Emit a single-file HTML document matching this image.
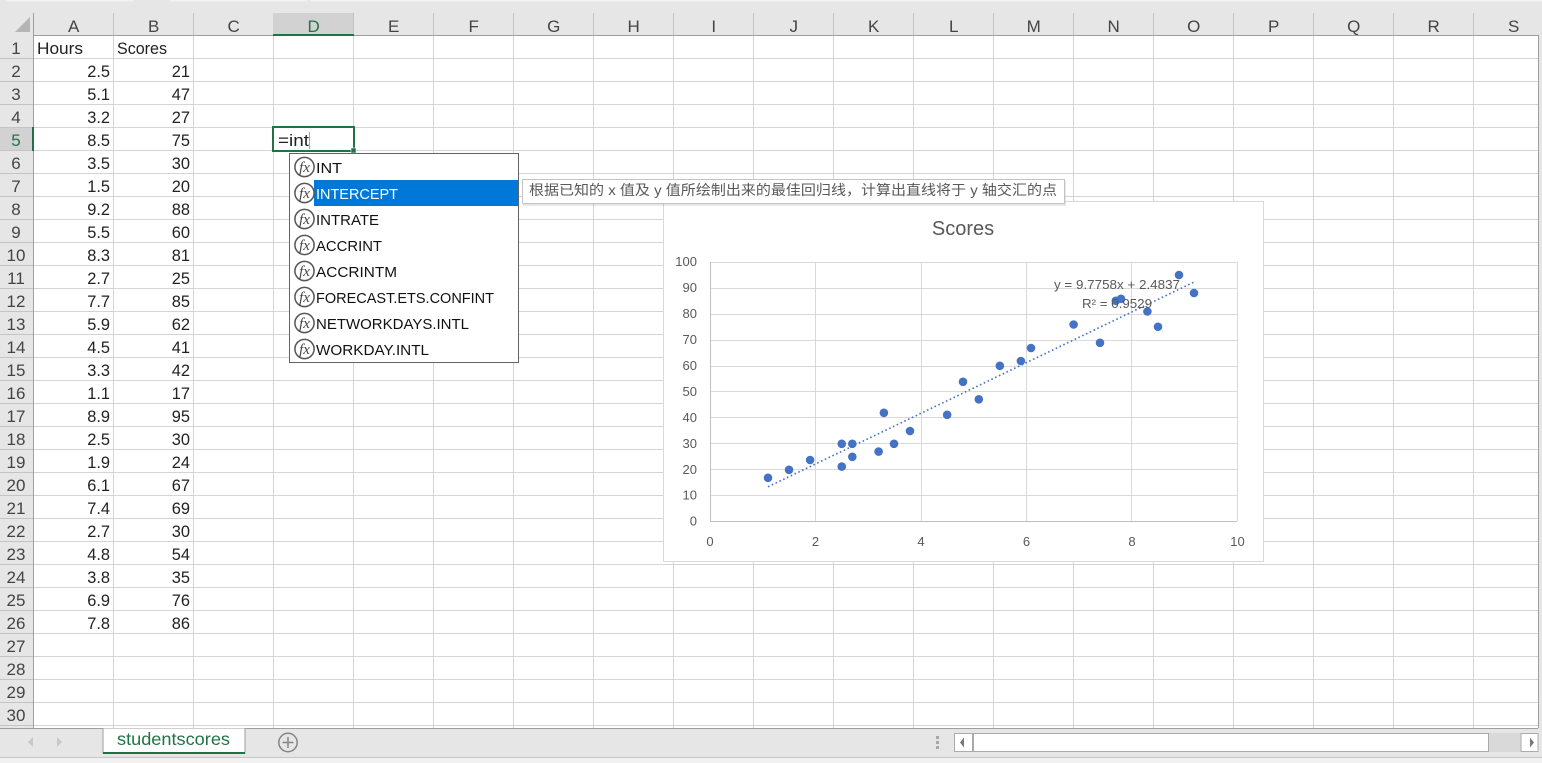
<!DOCTYPE html>
<html><head><meta charset="utf-8"><style>
html,body{margin:0;padding:0;background:#e6e6e6;width:1542px;height:763px;overflow:hidden}
svg{display:block}
text{font-family:"Liberation Sans","Noto Sans CJK SC",sans-serif}
.h{font-size:17px;fill:#444;text-anchor:middle}
.c{font-size:16.4px;fill:#222}
.n{font-size:16.4px;fill:#222;text-anchor:end}
.l{font-size:15px;fill:#111}
.f{font-family:"Liberation Serif",serif;font-style:italic;font-size:15px;fill:#444;text-anchor:middle}
.a{font-size:13px;fill:#595959}
.y{text-anchor:end}
.x{text-anchor:middle}
</style></head><body>
<svg width="1542" height="763" viewBox="0 0 1542 763" xmlns="http://www.w3.org/2000/svg">
<rect width="1542" height="763" fill="#e6e6e6"/>
<rect x="6" y="0" width="127" height="1.5" fill="#f2f2f2"/><rect x="170" y="0" width="137" height="1.5" fill="#f2f2f2"/><rect x="310" y="0" width="1232" height="1.5" fill="#f2f2f2"/>
<!-- sheet -->
<rect x="33" y="35" width="1505" height="693" fill="#fff"/>
<path fill="none" stroke="#d4d4d4" d="M33 58.5H1538M33 81.5H1538M33 104.5H1538M33 127.5H1538M33 150.5H1538M33 173.5H1538M33 196.5H1538M33 219.5H1538M33 242.5H1538M33 265.5H1538M33 288.5H1538M33 311.5H1538M33 334.5H1538M33 357.5H1538M33 380.5H1538M33 403.5H1538M33 426.5H1538M33 449.5H1538M33 472.5H1538M33 495.5H1538M33 518.5H1538M33 541.5H1538M33 564.5H1538M33 587.5H1538M33 610.5H1538M33 633.5H1538M33 656.5H1538M33 679.5H1538M33 702.5H1538M33 725.5H1538M113.5 35V728M193.5 35V728M273.5 35V728M353.5 35V728M433.5 35V728M513.5 35V728M593.5 35V728M673.5 35V728M753.5 35V728M833.5 35V728M913.5 35V728M993.5 35V728M1073.5 35V728M1153.5 35V728M1233.5 35V728M1313.5 35V728M1393.5 35V728M1473.5 35V728"/>
<!-- headers -->
<path fill="none" stroke="#c4c4c4" d="M0 58.5H33M0 81.5H33M0 104.5H33M0 127.5H33M0 150.5H33M0 173.5H33M0 196.5H33M0 219.5H33M0 242.5H33M0 265.5H33M0 288.5H33M0 311.5H33M0 334.5H33M0 357.5H33M0 380.5H33M0 403.5H33M0 426.5H33M0 449.5H33M0 472.5H33M0 495.5H33M0 518.5H33M0 541.5H33M0 564.5H33M0 587.5H33M0 610.5H33M0 633.5H33M0 656.5H33M0 679.5H33M0 702.5H33M0 725.5H33M113.5 13V35M193.5 13V35M273.5 13V35M353.5 13V35M433.5 13V35M513.5 13V35M593.5 13V35M673.5 13V35M753.5 13V35M833.5 13V35M913.5 13V35M993.5 13V35M1073.5 13V35M1153.5 13V35M1233.5 13V35M1313.5 13V35M1393.5 13V35M1473.5 13V35"/>
<rect x="273" y="13" width="80" height="22" fill="#d2d2d2"/>
<rect x="0" y="128" width="33" height="22" fill="#d2d2d2"/>
<path fill="none" stroke="#9f9f9f" d="M33.5 13V728M33 35.5H1538M1538.5 35V728M0 728.5H1538"/>
<rect x="273" y="34" width="81" height="2" fill="#217346"/>
<rect x="32" y="127" width="2" height="24" fill="#217346"/>
<path d="M30 17V32H15Z" fill="#b5b5b5"/>
<text class="h" x="73.7" y="32">A</text><text class="h" x="153.7" y="32">B</text><text class="h" x="233.7" y="32">C</text><text class="h" x="313.7" y="32" style="fill:#217346">D</text><text class="h" x="393.7" y="32">E</text><text class="h" x="473.7" y="32">F</text><text class="h" x="553.7" y="32">G</text><text class="h" x="633.7" y="32">H</text><text class="h" x="713.7" y="32">I</text><text class="h" x="793.7" y="32">J</text><text class="h" x="873.7" y="32">K</text><text class="h" x="953.7" y="32">L</text><text class="h" x="1033.7" y="32">M</text><text class="h" x="1113.7" y="32">N</text><text class="h" x="1193.7" y="32">O</text><text class="h" x="1273.7" y="32">P</text><text class="h" x="1353.7" y="32">Q</text><text class="h" x="1433.7" y="32">R</text><text class="h" x="1513.7" y="32">S</text>
<text class="h" x="16" y="54">1</text><text class="h" x="16" y="77">2</text><text class="h" x="16" y="100">3</text><text class="h" x="16" y="123">4</text><text class="h" x="16" y="146" style="fill:#217346">5</text><text class="h" x="16" y="169">6</text><text class="h" x="16" y="192">7</text><text class="h" x="16" y="215">8</text><text class="h" x="16" y="238">9</text><text class="h" x="16" y="261">10</text><text class="h" x="16" y="284">11</text><text class="h" x="16" y="307">12</text><text class="h" x="16" y="330">13</text><text class="h" x="16" y="353">14</text><text class="h" x="16" y="376">15</text><text class="h" x="16" y="399">16</text><text class="h" x="16" y="422">17</text><text class="h" x="16" y="445">18</text><text class="h" x="16" y="468">19</text><text class="h" x="16" y="491">20</text><text class="h" x="16" y="514">21</text><text class="h" x="16" y="537">22</text><text class="h" x="16" y="560">23</text><text class="h" x="16" y="583">24</text><text class="h" x="16" y="606">25</text><text class="h" x="16" y="629">26</text><text class="h" x="16" y="652">27</text><text class="h" x="16" y="675">28</text><text class="h" x="16" y="698">29</text><text class="h" x="16" y="721">30</text>
<!-- cells -->
<text class="c" x="37" y="54" textLength="46" lengthAdjust="spacingAndGlyphs">Hours</text><text class="c" x="117" y="54" textLength="50" lengthAdjust="spacingAndGlyphs">Scores</text>
<text class="n" x="110" y="77">2.5</text><text class="n" x="190" y="77">21</text>
<text class="n" x="110" y="100">5.1</text><text class="n" x="190" y="100">47</text>
<text class="n" x="110" y="123">3.2</text><text class="n" x="190" y="123">27</text>
<text class="n" x="110" y="146">8.5</text><text class="n" x="190" y="146">75</text>
<text class="n" x="110" y="169">3.5</text><text class="n" x="190" y="169">30</text>
<text class="n" x="110" y="192">1.5</text><text class="n" x="190" y="192">20</text>
<text class="n" x="110" y="215">9.2</text><text class="n" x="190" y="215">88</text>
<text class="n" x="110" y="238">5.5</text><text class="n" x="190" y="238">60</text>
<text class="n" x="110" y="261">8.3</text><text class="n" x="190" y="261">81</text>
<text class="n" x="110" y="284">2.7</text><text class="n" x="190" y="284">25</text>
<text class="n" x="110" y="307">7.7</text><text class="n" x="190" y="307">85</text>
<text class="n" x="110" y="330">5.9</text><text class="n" x="190" y="330">62</text>
<text class="n" x="110" y="353">4.5</text><text class="n" x="190" y="353">41</text>
<text class="n" x="110" y="376">3.3</text><text class="n" x="190" y="376">42</text>
<text class="n" x="110" y="399">1.1</text><text class="n" x="190" y="399">17</text>
<text class="n" x="110" y="422">8.9</text><text class="n" x="190" y="422">95</text>
<text class="n" x="110" y="445">2.5</text><text class="n" x="190" y="445">30</text>
<text class="n" x="110" y="468">1.9</text><text class="n" x="190" y="468">24</text>
<text class="n" x="110" y="491">6.1</text><text class="n" x="190" y="491">67</text>
<text class="n" x="110" y="514">7.4</text><text class="n" x="190" y="514">69</text>
<text class="n" x="110" y="537">2.7</text><text class="n" x="190" y="537">30</text>
<text class="n" x="110" y="560">4.8</text><text class="n" x="190" y="560">54</text>
<text class="n" x="110" y="583">3.8</text><text class="n" x="190" y="583">35</text>
<text class="n" x="110" y="606">6.9</text><text class="n" x="190" y="606">76</text>
<text class="n" x="110" y="629">7.8</text><text class="n" x="190" y="629">86</text>
<!-- active cell -->
<rect x="273" y="127" width="81" height="24" fill="#fff" stroke="#217346" stroke-width="2"/>
<text class="c" x="278" y="146" textLength="31" lengthAdjust="spacingAndGlyphs">=int</text>
<rect x="309" y="132" width="1" height="17" fill="#aaa"/>
<rect x="351" y="148" width="5" height="5" fill="#217346" stroke="#fff" stroke-width="0.5"/>
<!-- chart -->
<rect x="663.5" y="201.5" width="600" height="360" fill="#fff" stroke="#d9d9d9"/>
<text x="963" y="235" style="font-size:20px;fill:#595959;text-anchor:middle">Scores</text>
<path fill="none" stroke="#d9d9d9" d="M710 262.5H1237.5V521M710 288.5H1237M710 314.5H1237M710 340.5H1237M710 366.5H1237M710 391.5H1237M710 417.5H1237M710 443.5H1237M710 469.5H1237M710 495.5H1237M815.5 262V521M921.5 262V521M1026.5 262V521M1131.5 262V521"/>
<path fill="none" stroke="#bfbfbf" d="M710.5 262V521.5H1237"/>
<text class="a y" x="697" y="266">100</text><text class="a y" x="697" y="292">90</text><text class="a y" x="697" y="318">80</text><text class="a y" x="697" y="344">70</text><text class="a y" x="697" y="370">60</text><text class="a y" x="697" y="396">50</text><text class="a y" x="697" y="422">40</text><text class="a y" x="697" y="448">30</text><text class="a y" x="697" y="474">20</text><text class="a y" x="697" y="499.5">10</text><text class="a y" x="697" y="525.5">0</text>
<text class="a x" x="710" y="546">0</text><text class="a x" x="815.5" y="546">2</text><text class="a x" x="921" y="546">4</text><text class="a x" x="1026.5" y="546">6</text><text class="a x" x="1132" y="546">8</text><text class="a x" x="1237.5" y="546">10</text>
<path d="M768 486.8L1194.8 281.7" fill="none" stroke="#4472c4" stroke-width="1.6" stroke-dasharray="1.6 2.6"/>
<g fill="#4472c4"><circle cx="841.75" cy="466.6" r="4.3"/><circle cx="978.8" cy="399.3" r="4.3"/><circle cx="878.6" cy="451.6" r="4.3"/><circle cx="1158" cy="326.75" r="4.3"/><circle cx="894" cy="443.8" r="4.3"/><circle cx="789" cy="469.8" r="4.3"/><circle cx="1194" cy="293" r="4.3"/><circle cx="999.85" cy="365.8" r="4.3"/><circle cx="1147.4" cy="311.5" r="4.3"/><circle cx="852.3" cy="456.8" r="4.3"/><circle cx="1115.8" cy="300.85" r="4.3"/><circle cx="1020.9" cy="361" r="4.3"/><circle cx="947.15" cy="414.8" r="4.3"/><circle cx="883.9" cy="412.8" r="4.3"/><circle cx="768" cy="477.8" r="4.3"/><circle cx="1179" cy="275" r="4.3"/><circle cx="841.75" cy="443.8" r="4.3"/><circle cx="810.1" cy="460" r="4.3"/><circle cx="1031" cy="348" r="4.3"/><circle cx="1100" cy="342.8" r="4.3"/><circle cx="852.3" cy="443.8" r="4.3"/><circle cx="963" cy="381.8" r="4.3"/><circle cx="910" cy="431" r="4.3"/><circle cx="1073.6" cy="324.5" r="4.3"/><circle cx="1121" cy="298.8" r="4.3"/></g>
<text x="1054" y="289" style="font-size:13px;fill:#595959" textLength="126" lengthAdjust="spacingAndGlyphs">y = 9.7758x + 2.4837</text>
<text x="1082" y="308" style="font-size:13px;fill:#595959" textLength="70" lengthAdjust="spacingAndGlyphs">R² = 0.9529</text>
<!-- autocomplete -->
<rect x="289.5" y="153.5" width="229" height="209" fill="#fff" stroke="#646464"/>
<rect x="314" y="180" width="204" height="26" fill="#0078d7"/>
<g fill="#fff" stroke="#555" stroke-width="1.5"><circle cx="304.5" cy="167" r="9.6"/><circle cx="304.5" cy="193" r="9.6"/><circle cx="304.5" cy="219" r="9.6"/><circle cx="304.5" cy="245" r="9.6"/><circle cx="304.5" cy="271" r="9.6"/><circle cx="304.5" cy="297" r="9.6"/><circle cx="304.5" cy="323" r="9.6"/><circle cx="304.5" cy="349" r="9.6"/></g>
<text class="f" x="304.5" y="172">fx</text><text class="f" x="304.5" y="198">fx</text><text class="f" x="304.5" y="224">fx</text><text class="f" x="304.5" y="250">fx</text><text class="f" x="304.5" y="276">fx</text><text class="f" x="304.5" y="302">fx</text><text class="f" x="304.5" y="328">fx</text><text class="f" x="304.5" y="354">fx</text>
<text class="l" x="316" y="173" textLength="26" lengthAdjust="spacingAndGlyphs">INT</text><text class="l" x="316" y="199" style="fill:#fff" textLength="82" lengthAdjust="spacingAndGlyphs">INTERCEPT</text><text class="l" x="316" y="225" textLength="63" lengthAdjust="spacingAndGlyphs">INTRATE</text><text class="l" x="316" y="251" textLength="66" lengthAdjust="spacingAndGlyphs">ACCRINT</text><text class="l" x="316" y="277" textLength="81" lengthAdjust="spacingAndGlyphs">ACCRINTM</text><text class="l" x="316" y="303" textLength="178" lengthAdjust="spacingAndGlyphs">FORECAST.ETS.CONFINT</text><text class="l" x="316" y="329" textLength="153" lengthAdjust="spacingAndGlyphs">NETWORKDAYS.INTL</text><text class="l" x="316" y="355" textLength="113" lengthAdjust="spacingAndGlyphs">WORKDAY.INTL</text>
<!-- tooltip -->
<rect x="523" y="181" width="543" height="25" fill="#000" opacity="0.09"/>
<rect x="522.5" y="179.5" width="542" height="24" fill="#fff" stroke="#c4c4c4"/>
<text x="529" y="195" style="font-size:14px;fill:#595959" textLength="528" lengthAdjust="spacingAndGlyphs">根据已知的 x 值及 y 值所绘制出来的最佳回归线，计算出直线将于 y 轴交汇的点</text>
<!-- sheet tabs -->
<path d="M103 728.5V753H245V728.5" fill="#fff" stroke="#9f9f9f"/>
<rect x="103" y="752" width="142" height="2" fill="#217346"/>
<text x="117" y="745" style="font-size:17.5px;fill:#217346" textLength="113" lengthAdjust="spacingAndGlyphs">studentscores</text>
<path d="M33 737V747L28 742ZM57 737V747L62 742Z" fill="#c8c8c8"/>
<circle cx="288" cy="742.5" r="9.2" fill="none" stroke="#858585" stroke-width="1.5"/>
<path d="M282.5 742.5H293.5M288 737V748" stroke="#858585" stroke-width="1.5" fill="none"/>
<!-- scrollbar -->
<rect x="936" y="736" width="3" height="3" fill="#a8a8a8"/><rect x="936" y="741" width="3" height="3" fill="#a8a8a8"/><rect x="936" y="746" width="3" height="3" fill="#a8a8a8"/>
<rect x="1489" y="733" width="32" height="19" fill="#d9d9d9"/>
<rect x="954.5" y="733.5" width="18" height="18" fill="#fff" stroke="#ababab"/>
<rect x="973.5" y="733.5" width="515" height="18" fill="#fff" stroke="#ababab"/>
<rect x="1521" y="733.5" width="17" height="18" fill="#fff" stroke="#ababab"/>
<path d="M964 737.5V747.5L960 742.5ZM1530 737.5V747.5L1534 742.5Z" fill="#777"/>
<!-- bottom -->
<rect x="0" y="757" width="1542" height="1" fill="#c6c6c6"/>
<rect x="0" y="758" width="1542" height="5" fill="#f1f1f1"/>
</svg>
</body></html>
